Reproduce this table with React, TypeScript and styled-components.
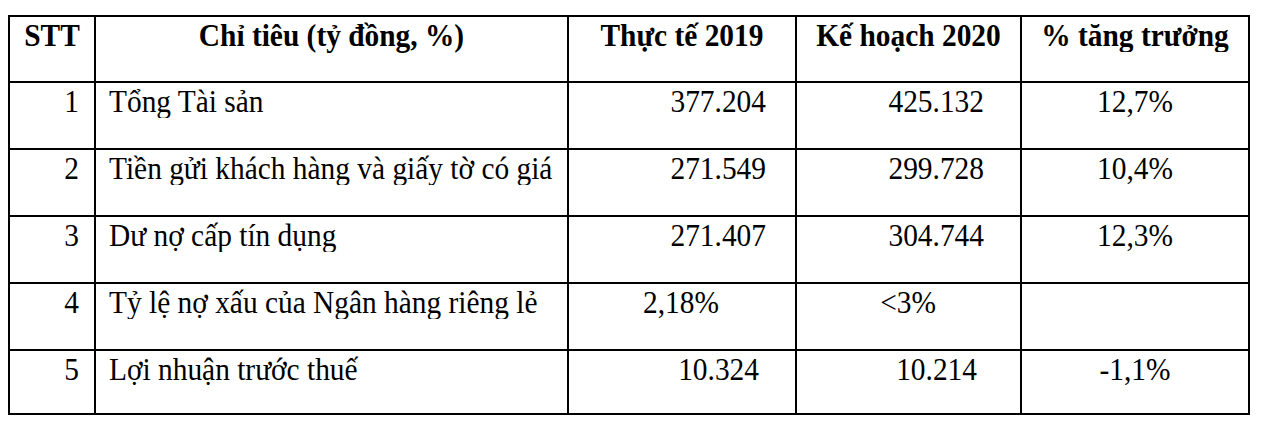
import styled, { createGlobalStyle } from "styled-components";

const GlobalStyle = createGlobalStyle`
  html, body {
    margin: 0;
    background: #fff;
  }
`;

type Align = "left" | "center" | "right";

interface Row {
  no: string;
  name: string;
  actual: string;
  actualPad: number;
  plan: string;
  planPad: number;
  growth: string;
}

const rows: Row[] = [
  { no: "1", name: "Tổng Tài sản", actual: "377.204", actualPad: 29, plan: "425.132", planPad: 36, growth: "12,7%" },
  { no: "2", name: "Tiền gửi khách hàng và giấy tờ có giá", actual: "271.549", actualPad: 29, plan: "299.728", planPad: 36, growth: "10,4%" },
  { no: "3", name: "Dư nợ cấp tín dụng", actual: "271.407", actualPad: 29, plan: "304.744", planPad: 36, growth: "12,3%" },
  { no: "4", name: "Tỷ lệ nợ xấu của Ngân hàng riêng lẻ", actual: "2,18%", actualPad: 76, plan: "<3%", planPad: 84, growth: "" },
  { no: "5", name: "Lợi nhuận trước thuế", actual: "10.324", actualPad: 36, plan: "10.214", planPad: 43, growth: "-1,1%" },
];

const headers = ["STT", "Chỉ tiêu (tỷ đồng, %)", "Thực tế 2019", "Kế hoạch 2020", "% tăng trưởng"];

const Page = styled.div`
  padding: 15px 0 0 8px;
`;

const Table = styled.div`
  display: grid;
  grid-template-columns: 86px 473px 228px 225px 228px;
  grid-template-rows: 66px repeat(4, 67px) 64px;
  width: max-content;
  border-left: 2px solid #000;
  border-top: 2px solid #000;
  font-family: "Liberation Serif", "Times New Roman", serif;
  font-size: 29.4px;
  line-height: 34px;
  color: #000;
`;

const Cell = styled.div<{ $align: Align; $padLeft?: number; $padRight?: number; $bold?: boolean }>`
  box-sizing: border-box;
  border-right: 2px solid #000;
  border-bottom: 2px solid #000;
  padding: 1px ${(p) => p.$padRight ?? 0}px 0 ${(p) => p.$padLeft ?? 0}px;
  text-align: ${(p) => p.$align};
  font-weight: ${(p) => (p.$bold ? 700 : 400)};
  white-space: nowrap;
  overflow: hidden;
`;

const Text = styled.span`
  display: inline-block;
  transform: scaleY(1.06);
`;

export default function App() {
  return (
    <Page>
      <GlobalStyle />
      <Table>
        {headers.map((h) => (
          <Cell key={h} $align="center" $bold>
            <Text>{h}</Text>
          </Cell>
        ))}
        {rows.map((r) => [
          <Cell key={r.no + "n"} $align="right" $padRight={15}>
            <Text>{r.no}</Text>
          </Cell>,
          <Cell key={r.no + "t"} $align="left" $padLeft={13}>
            <Text>{r.name}</Text>
          </Cell>,
          <Cell key={r.no + "a"} $align="right" $padRight={r.actualPad}>
            <Text>{r.actual}</Text>
          </Cell>,
          <Cell key={r.no + "p"} $align="right" $padRight={r.planPad}>
            <Text>{r.plan}</Text>
          </Cell>,
          <Cell key={r.no + "g"} $align="center">
            <Text>{r.growth}</Text>
          </Cell>,
        ])}
      </Table>
    </Page>
  );
}
